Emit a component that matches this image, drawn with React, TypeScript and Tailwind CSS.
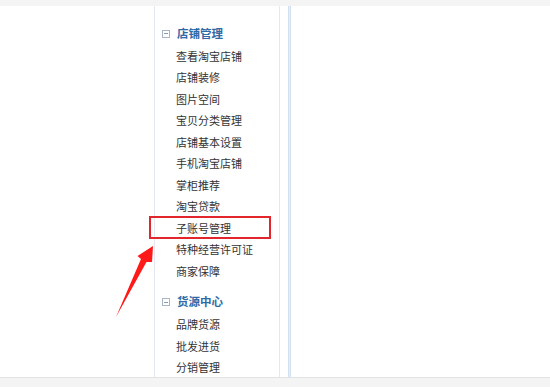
import React from "react";

const group1 = ["查看淘宝店铺","店铺装修","图片空间","宝贝分类管理","店铺基本设置","手机淘宝店铺","掌柜推荐","淘宝贷款","子账号管理","特种经营许可证","商家保障"];
const group2 = ["品牌货源","批发进货","分销管理"];

function MinusBox() {
  return (
    <span className="mr-[7px] flex h-[8px] w-[8px] items-center justify-center border border-[#a9b6c6] bg-white">
      <span className="h-[1px] w-[4px] bg-[#8c9bb0]" />
    </span>
  );
}

function Header({ title }: { title: string }) {
  return (
    <div className="flex h-[23px] items-center pl-[7px] text-[11.5px] font-bold text-[#2f6aa6]">
      <MinusBox />
      <span>{title}</span>
    </div>
  );
}

function Item({ label, boxed }: { label: string; boxed?: boolean }) {
  return (
    <div className="relative flex h-[21.5px] items-center pl-[21px] text-[11px] text-[#333333]">
      {boxed && (
        <span className="absolute left-[-6px] top-[-1px] h-[23px] w-[122px] border-[2.5px] border-[#e2262b]" />
      )}
      <span>{label}</span>
    </div>
  );
}

export default function App() {
  return (
    <div
      className="relative flex h-[387px] w-[550px] flex-col overflow-hidden bg-white"
      style={{ fontFamily: '"Noto Sans CJK SC", "Noto Sans", sans-serif' }}
    >
      <div className="h-[6px] shrink-0 bg-[#f4f4f4]" />
      <div className="flex h-[371px] shrink-0">
        <div className="w-[154px] shrink-0" />
        <div className="w-[126px] shrink-0 border-l border-r border-[#e4e9f1] pt-[16px]">
          <Header title="店铺管理" />
          {group1.map((l) => (
            <Item key={l} label={l} boxed={l === "子账号管理"} />
          ))}
          <div className="h-[9px]" />
          <Header title="货源中心" />
          {group2.map((l) => (
            <Item key={l} label={l} />
          ))}
        </div>
        <div className="w-[8px] shrink-0" />
        <div className="w-[3px] shrink-0 border-l border-r border-[#d3e0f0] bg-[#e6eefa]" />
        <div className="flex-1" />
      </div>
      <div className="flex-1 border-t border-[#e2e2e2] bg-[#f4f4f4]" />
      <svg className="pointer-events-none absolute left-0 top-0" width="550" height="387">
        <polygon
          points="116,317 141,259 137.5,256 153,246 152,262 146.5,262"
          fill="#ff1a1a"
        />
      </svg>
    </div>
  );
}
